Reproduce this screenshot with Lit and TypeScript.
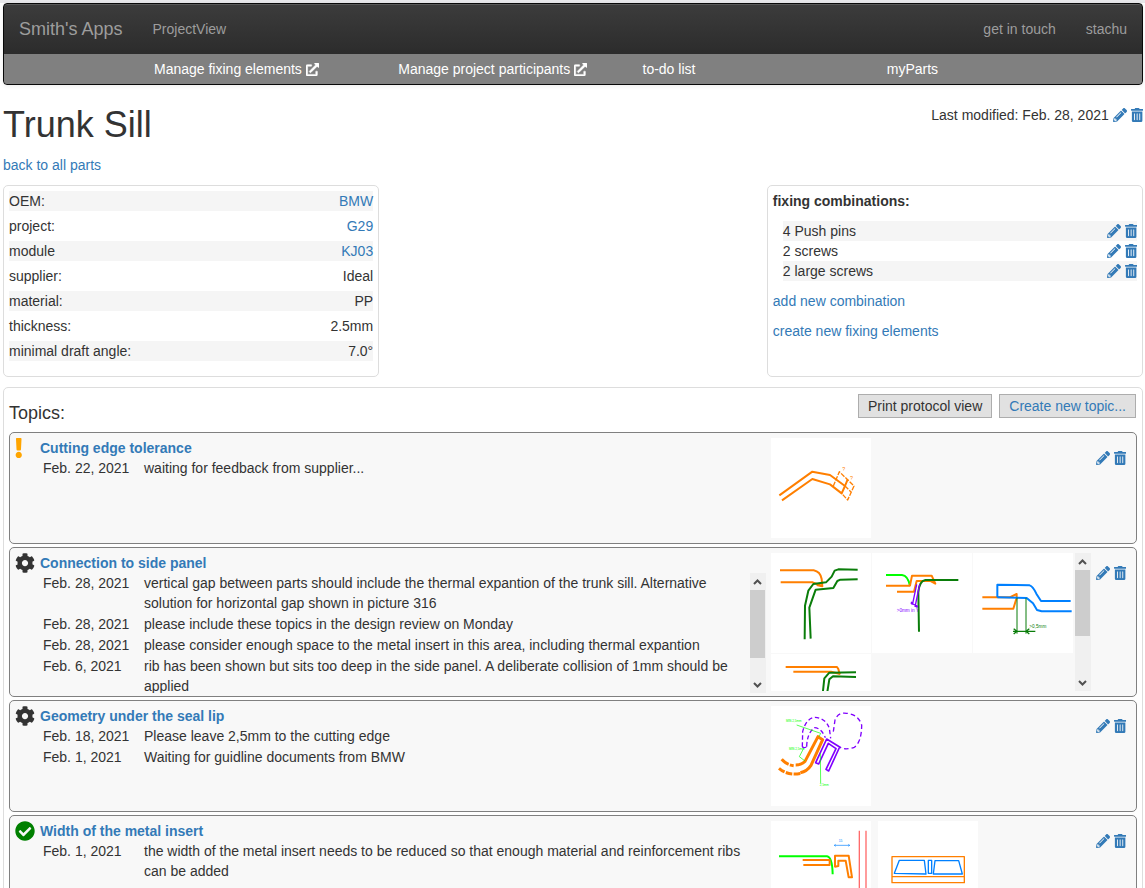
import { LitElement, html, svg, css, nothing, SVGTemplateResult, TemplateResult } from "lit";
import { customElement, property } from "lit/decorators.js";
import { classMap } from "lit/directives/class-map.js";

const ICONS: Record<string, [number, string]> = {
  pencil: [512, "M497.9 142.1l-46.1 46.1c-4.7 4.7-12.3 4.7-17 0l-111-111c-4.7-4.7-4.7-12.3 0-17l46.1-46.1c18.7-18.7 49.1-18.7 67.9 0l60.1 60.1c18.8 18.7 18.8 49.1 0 67.9zM284.2 99.8L21.6 362.4.4 483.9c-2.9 16.4 11.4 30.6 27.8 27.8l121.5-21.3 262.6-262.6c4.7-4.7 4.7-12.3 0-17l-111-111c-4.8-4.7-12.4-4.7-17.1 0zM124.1 339.9c-5.5-5.5-5.5-14.3 0-19.8l154-154c5.5-5.5 14.3-5.5 19.8 0s5.5 14.3 0 19.8l-154 154c-5.5 5.5-14.3 5.5-19.8 0zM88 424h48v36.3l-64.5 11.3-31.1-31.1L51.7 376H88v48z"],
  trash: [448, "M32 464a48 48 0 0 0 48 48h288a48 48 0 0 0 48-48V128H32zm272-256a16 16 0 0 1 32 0v224a16 16 0 0 1-32 0zm-96 0a16 16 0 0 1 32 0v224a16 16 0 0 1-32 0zm-96 0a16 16 0 0 1 32 0v224a16 16 0 0 1-32 0zM432 32H312l-9.4-18.7A24 24 0 0 0 281.1 0H166.8a23.72 23.72 0 0 0-21.4 13.3L136 32H16A16 16 0 0 0 0 48v32a16 16 0 0 0 16 16h416a16 16 0 0 0 16-16V48a16 16 0 0 0-16-16z"],
  external: [512, "M432,320H400a16,16,0,0,0-16,16V448H64V128H208a16,16,0,0,0,16-16V80a16,16,0,0,0-16-16H48A48,48,0,0,0,0,112V464a48,48,0,0,0,48,48H400a48,48,0,0,0,48-48V336A16,16,0,0,0,432,320ZM488,0h-128c-21.37,0-32.05,25.91-17,41l35.73,35.73L135,320.37a24,24,0,0,0,0,34L157.67,377a24,24,0,0,0,34,0L435.28,133.32,471,169c15,15,41,4.5,41-17V24A24,24,0,0,0,488,0Z"],
  warning: [192, "M176 432c0 44.112-35.888 80-80 80s-80-35.888-80-80 35.888-80 80-80 80 35.888 80 80zM25.26 25.199l13.6 272C39.499 309.972 50.041 320 62.83 320h66.34c12.789 0 23.331-10.028 23.97-22.801l13.6-272C167.425 11.49 156.496 0 142.77 0H49.23C35.504 0 24.575 11.49 25.26 25.199z"],
  cog: [512, "M487.4 315.7l-42.6-24.6c4.3-23.2 4.3-47 0-70.2l42.6-24.6c4.9-2.8 7.1-8.6 5.5-14-11.1-35.6-30-67.8-54.7-94.6-3.8-4.1-10-5.1-14.8-2.3L380.8 110c-17.9-15.4-38.5-27.3-60.8-35.1V25.8c0-5.6-3.9-10.5-9.4-11.7-36.7-8.2-74.3-7.8-109.2 0-5.5 1.2-9.4 6.1-9.4 11.7V75c-22.2 7.9-42.8 19.8-60.8 35.1L88.7 85.5c-4.9-2.8-11-1.9-14.8 2.3-24.7 26.7-43.6 58.9-54.7 94.6-1.7 5.4.6 11.2 5.5 14L67.3 221c-4.3 23.2-4.3 47 0 70.2l-42.6 24.6c-4.9 2.8-7.1 8.6-5.5 14 11.1 35.6 30 67.8 54.7 94.6 3.8 4.1 10 5.1 14.8 2.3l42.6-24.6c17.9 15.4 38.5 27.3 60.8 35.1v49.2c0 5.6 3.9 10.5 9.4 11.7 36.7 8.2 74.3 7.8 109.2 0 5.5-1.2 9.4-6.1 9.4-11.7v-49.2c22.2-7.9 42.8-19.8 60.8-35.1l42.6 24.6c4.9 2.8 11 1.9 14.8-2.3 24.7-26.7 43.6-58.9 54.7-94.6 1.5-5.5-.7-11.3-5.6-14.1zM256 336c-44.1 0-80-35.9-80-80s35.9-80 80-80 80 35.9 80 80-35.9 80-80 80z"],
  check: [512, "M504 256c0 136.967-111.033 248-248 248S8 392.967 8 256 119.033 8 256 8s248 111.033 248 248zM227.314 387.314l184-184c6.248-6.248 6.248-16.379 0-22.627l-22.627-22.627c-6.248-6.249-16.379-6.249-22.628 0L216 308.118l-70.059-70.059c-6.248-6.248-16.379-6.248-22.628 0l-22.627 22.627c-6.248 6.248-6.248 16.379 0 22.627l104 104c6.249 6.249 16.379 6.249 22.628.001z"],
};

const icon = (name: string, cls = "icon") => {
  const [w, d] = ICONS[name];
  return html`<svg class=${cls} viewBox="0 0 ${w} 512" aria-hidden="true"><path fill="currentColor" d=${d}></path></svg>`;
};

const base = css`
  * { box-sizing: border-box; }
  a { color: #337ab7; text-decoration: none; }
  .icon { display: block; height: 14px; }
  .actions { display: flex; align-items: center; gap: 4px; height: 20px; }
`;

const actions = (what: string) => html`<span class="actions">
  <a href="#edit" aria-label="Edit ${what}">${icon("pencil")}</a>
  <a href="#delete" aria-label="Delete ${what}">${icon("trash")}</a>
</span>`;

const ORANGE = "#ff7f00";
const GREEN = "#0a7d0a";
const LIME = "#00ff00";
const BLUE = "#0080ff";
const PURPLE = "#8000ff";

const line = (d: string, stroke: string, width = 6, dash = "") =>
  svg`<path d=${d} fill="none" stroke=${stroke} stroke-width=${width} stroke-dasharray=${dash || nothing} stroke-linejoin="round"></path>`;
const note = (x: number, y: number, fill: string, size: number, text: string) =>
  svg`<text x=${x} y=${y} fill=${fill} font-size=${size}>${text}</text>`;

/* Each sketch is drawn on a 300 x 300 sheet. */
const SKETCHES: Record<string, SVGTemplateResult[]> = {
  edge: [
    line("M25 172L124 101L177 111L222 144", ORANGE),
    line("M33 187L124 123L177 139L212 166L222 144L230 124", ORANGE),
    line("M187 144L205 101L249 144L230 186L212 166M222 144L240 162", ORANGE, 4, "14 4"),
    note(214, 99, ORANGE, 16, "?"),
    note(237, 126, ORANGE, 16, "?"),
  ],
  panel: [
    line("M27 52H128Q148 56 152 78L154 100L137 96", ORANGE),
    line("M29 88H125L154 99", ORANGE),
    line("M101 259L102 158L112 113L127 93L165 88L182 71L191 53L202 49L260 50", GREEN),
    line("M119 257L115 164L134 110L187 105L199 84L208 80L260 79", GREEN),
  ],
  gap: [
    line("M42 66H90Q108 68 114 99", LIME),
    line("M42 98H114L120 68H179L190 92L172 82", ORANGE),
    line("M75 116H126L134 84H180", ORANGE),
    line("M259 81H160Q142 84 139 118L141 236", GREEN),
    line("M134 94L122 152M143 94L129 162M116 150L138 160M118 146l3 9M136 164l-6-7", PURPLE, 4),
    note(74, 176, PURPLE, 14, ">0mm in Y"),
  ],
  overlap: [
    line("M28 133H110L131 123V134L121 167H28", ORANGE),
    line("M73 133V95L170 97Q180 100 190 122L204 144H293", BLUE),
    line("M73 133L161 135L180 151L192 171L206 175H296", BLUE),
    line("M132 134V242M159 136V242", GREEN, 3),
    line("M120 235H187M122 227L132 235L122 243M169 227L159 235L169 243", GREEN, 4),
    note(169, 225, GREEN, 14, ">0,5mm"),
  ],
  rib: [
    line("M44 39H198L202 45L206 61", ORANGE),
    line("M67 53H180L208 60", ORANGE),
    line("M155 120L160 73L175 56L255 55", GREEN),
    line("M168 120L175 76L186 67L255 69", GREEN),
  ],
  seal: [
    line("M187 77L192 42Q202 17 227 22Q262 25 272 57Q272 107 250 124Q220 134 205 122", PURPLE, 4, "14 9"),
    line("M94 122L95 77Q105 37 132 34Q165 37 175 67L179 97M107 122Q108 82 130 65Q150 65 163 95M94 122Q100 128 107 122", PURPLE, 4, "13 8"),
    line("M134 170L167 99L206 123L173 195L165 190L195 128L172 112L143 174Z", PURPLE, 5),
    line("M32 160Q46 176 68 179", ORANGE, 9, "26 4"),
    line("M24 187Q50 210 90 202", ORANGE, 9, "20 4"),
    line("M74 177Q90 177 102 166L141 92L155 101L120 178Q108 196 88 200", ORANGE, 9),
    line("M77 57L149 82L144 92M98 127L85 152L102 165M148 142L149 232", LIME, 2),
    note(45, 49, LIME, 9, "MIN 2,5mm"),
    note(54, 132, LIME, 9, "MIN 2,5mm"),
    note(146, 240, LIME, 9, "2,5mm"),
  ],
  width: [
    line("M24 106H168Q184 108 185 160", LIME),
    line("M95 117H176V132H97", ORANGE),
    line("M192 137V104H233L243 169H233L224 119H202V135Z", ORANGE),
    line("M265 29V300M285 29V300", "#ff6b6b", 4),
    line("M190 73H236M194 70L190 73L194 76M232 70L236 73L232 76", BLUE, 2),
    note(203, 64, BLUE, 10, "15"),
  ],
  windows: [
    line("M42 107H259V185H42ZM42 167H259", ORANGE, 4),
    line("M49 157L64 118H139L144 159ZM166 159L171 119H242L253 159ZM151 118H161V157H151Z", BLUE, 4),
  ],
};

@customElement("scroll-track")
class ScrollTrack extends LitElement {
  static styles = css`
    :host { display: flex; flex-direction: column; width: 16px; background: #f0f0f0; }
    .arrow { display: block; width: 16px; height: 17px; fill: none; stroke: #505050; stroke-width: 2; }
    .thumb { flex: 0 0 auto; background: #cdcdcd; margin-right: 1px; }
    .rest { flex: 1; }
  `;
  @property({ type: Number }) thumb = 66;
  render() {
    return html`<svg class="arrow" viewBox="0 0 16 17"><path d="M4 11L7.500 7.500L11 11"></path></svg>
      <div class="thumb" style="height:${this.thumb}px"></div>
      <div class="rest"></div>
      <svg class="arrow" viewBox="0 0 16 17"><path d="M4 7L7.500 10.500L11 7"></path></svg>`;
  }
}

interface Topic {
  status: "warning" | "cog" | "check";
  title: string;
  entries: [string, string][];
  sketches: string[];
  scroll?: boolean;
}

@customElement("topic-card")
class TopicCard extends LitElement {
  static styles = [base, css`
    :host { display: block; }
    .card {
      display: grid; grid-template-columns: 20px minmax(0, 1fr) 320px auto; column-gap: 5px;
      padding: 5px 10px 5px 5px; border: 1px solid #808080; border-radius: 5px; background: #f8f8f8;
    }
    .status { display: block; height: 20px; color: #333; }
    .status.warning { color: #ffa500; }
    .status.check { color: #008000; }
    h3 { margin: 0; font-size: 14px; line-height: 20px; font-weight: bold; }
    .body { display: flex; min-width: 0; }
    .scrolling .body { height: 120px; overflow: hidden; }
    .entries { flex: 1; min-width: 0; }
    table { border-collapse: collapse; width: 100%; }
    td { padding: 0 0 1px; vertical-align: top; text-align: left; }
    .date { width: 104px; padding-left: 3px; white-space: nowrap; }
    .media { display: flex; }
    .scrolling .media { height: 138px; overflow: hidden; }
    .scrolling { max-height: 150px; }
    .sheets { display: flex; flex-wrap: wrap; flex: 1; align-content: flex-start; gap: 1px 7px; }
    .scrolling .sheets { gap: 1px; }
    .sheet { display: block; width: 100px; height: 100px; background: #fff; font-family: "Liberation Sans", Arial, sans-serif; }
    .tools { padding-top: 10px; }
  `];
  @property({ attribute: false }) topic!: Topic;
  render() {
    const t = this.topic;
    return html`<article class=${classMap({ card: true, scrolling: !!t.scroll })}>
      <div>${icon(t.status, `status ${t.status}`)}</div>
      <div>
        <h3><a href="#topic">${t.title}</a></h3>
        <div class="body">
          <div class="entries"><table><tbody>
            ${t.entries.map(([d, text]) => html`<tr><td class="date">${d}</td><td>${text}</td></tr>`)}
          </tbody></table></div>
          ${t.scroll ? html`<scroll-track .thumb=${68}></scroll-track>` : nothing}
        </div>
      </div>
      <div class="media">
        <div class="sheets">
          ${t.sketches.map((s) => html`<svg class="sheet" viewBox="0 0 300 300" role="img" aria-label=${s}>${SKETCHES[s]}</svg>`)}
        </div>
        ${t.scroll ? html`<scroll-track .thumb=${66}></scroll-track>` : nothing}
      </div>
      <div class="tools">${actions(t.title)}</div>
    </article>`;
  }
}

const TOPICS: Topic[] = [
  { status: "warning", title: "Cutting edge tolerance", entries: [["Feb. 22, 2021", "waiting for feedback from supplier..."]], sketches: ["edge"] },
  {
    status: "cog", title: "Connection to side panel", scroll: true,
    entries: [
      ["Feb. 28, 2021", "vertical gap between parts should include the thermal expantion of the trunk sill. Alternative solution for horizontal gap shown in picture 316"],
      ["Feb. 28, 2021", "please include these topics in the design review on Monday"],
      ["Feb. 28, 2021", "please consider enough space to the metal insert in this area, including thermal expantion"],
      ["Feb. 6, 2021", "rib has been shown but sits too deep in the side panel. A deliberate collision of 1mm should be applied"],
    ],
    sketches: ["panel", "gap", "overlap", "rib"],
  },
  {
    status: "cog", title: "Geometry under the seal lip",
    entries: [["Feb. 18, 2021", "Please leave 2,5mm to the cutting edge"], ["Feb. 1, 2021", "Waiting for guidline documents from BMW"]],
    sketches: ["seal"],
  },
  {
    status: "check", title: "Width of the metal insert",
    entries: [["Feb. 1, 2021", "the width of the metal insert needs to be reduced so that enough material and reinforcement ribs can be added"]],
    sketches: ["width", "windows"],
  },
];

const link = (text: string) => html`<a href="#">${text}</a>`;
const PROPERTIES: [string, string | TemplateResult][] = [
  ["OEM:", link("BMW")],
  ["project:", link("G29")],
  ["module", link("KJ03")],
  ["supplier:", "Ideal"],
  ["material:", "PP"],
  ["thickness:", "2.5mm"],
  ["minimal draft angle:", "7.0°"],
];

@customElement("app-root")
class AppRoot extends LitElement {
  static styles = [base, css`
    :host {
      display: block; height: 100vh; overflow-y: auto; scrollbar-width: none; box-sizing: border-box;
      background: #fff; color: #333;
      font: 14px/20px "Liberation Sans", Arial, Helvetica, sans-serif;
    }
    .page { padding: 0 2px 0 3px; border-top: 3px solid #e8e8eb; }
    .navbar {
      border: 1px solid #080808; border-radius: 4px; overflow: hidden;
      background: linear-gradient(to bottom, #3c3c3c, #222);
      box-shadow: inset 0 1px 0 rgba(255, 255, 255, 0.15), 0 1px 5px rgba(0, 0, 0, 0.08);
    }
    .main-nav { display: flex; height: 50px; align-items: center; }
    .main-nav a { padding: 15px; color: #9d9d9d; }
    .main-nav .brand { font-size: 18px; }
    .spacer { flex: 1; }
    .sub-nav {
      display: grid; grid-template-columns: repeat(4, 1fr); align-items: center;
      height: 30px; padding: 0 11px 0 150px; background: #808080;
    }
    .sub-nav a { display: flex; align-items: center; gap: 4px; color: #fff; }
    .sub-nav .icon { height: 13px; stroke: currentColor; stroke-width: 20px; }
    .heading { display: flex; justify-content: space-between; margin-top: 20px; }
    h1 { margin: 0; font-size: 36px; line-height: 40px; font-weight: normal; }
    .modified { display: flex; gap: 4px; height: 20px; }
    p { margin: 10px 0; }
    .panels { display: flex; justify-content: space-between; align-items: stretch; }
    .panel { width: 33%; padding: 5px; }
    .panel, .topics { border: 1px solid #ddd; border-radius: 5px; }
    dl { margin: 0 0 10px; display: grid; gap: 5px; }
    dd { margin: 0; }
    .row { display: flex; justify-content: space-between; }
    .row:nth-child(odd) { background: #f5f5f5; }
    h2 { margin: 0; font-size: 14px; line-height: 20px; }
    ul { list-style: none; margin: 10px 0; padding: 0 0 0 10px; }
    .topics { margin-top: 10px; padding: 5px; }
    .topics-head { display: flex; align-items: flex-start; gap: 7px; height: 39px; }
    .topics-head h2 { flex: 1; padding-top: 10px; font-size: 18px; font-weight: normal; }
    button {
      height: 24px; margin: 1px 0 0; padding: 0 9px; border: 1px solid #adadad; background: #e1e1e1;
      color: #333; font: inherit; line-height: 20px;
    }
    .create { color: #337ab7; margin-right: 1px; }
    .list { display: grid; gap: 3px; }
  `];
  render() {
    return html`<div class="page">
      <nav class="navbar">
        <div class="main-nav">
          <a class="brand" href="#">Smith's Apps</a><a href="#">ProjectView</a>
          <span class="spacer"></span>
          <a href="#">get in touch</a><a href="#">stachu</a>
        </div>
        <div class="sub-nav">
          <a href="#">Manage fixing elements ${icon("external")}</a>
          <a href="#">Manage project participants ${icon("external")}</a>
          <a href="#">to-do list</a>
          <a href="#">myParts</a>
        </div>
      </nav>
      <header class="heading">
        <h1>Trunk Sill</h1>
        <div class="modified">Last modified: Feb. 28, 2021 ${actions("part")}</div>
      </header>
      <p><a href="#">back to all parts</a></p>
      <div class="panels">
        <section class="panel">
          <dl>${PROPERTIES.map(([k, v]) => html`<div class="row"><dt>${k}</dt><dd>${v}</dd></div>`)}</dl>
        </section>
        <section class="panel">
          <h2>fixing combinations:</h2>
          <ul>${["4 Push pins", "2 screws", "2 large screws"].map((c) => html`<li class="row">${c}${actions(c)}</li>`)}</ul>
          <p><a href="#">add new combination</a></p>
          <p><a href="#">create new fixing elements</a></p>
        </section>
      </div>
      <section class="topics">
        <div class="topics-head">
          <h2>Topics:</h2>
          <button type="button">Print protocol view</button>
          <button type="button" class="create">Create new topic...</button>
        </div>
        <div class="list">${TOPICS.map((t) => html`<topic-card .topic=${t}></topic-card>`)}</div>
      </section>
    </div>`;
  }
}
